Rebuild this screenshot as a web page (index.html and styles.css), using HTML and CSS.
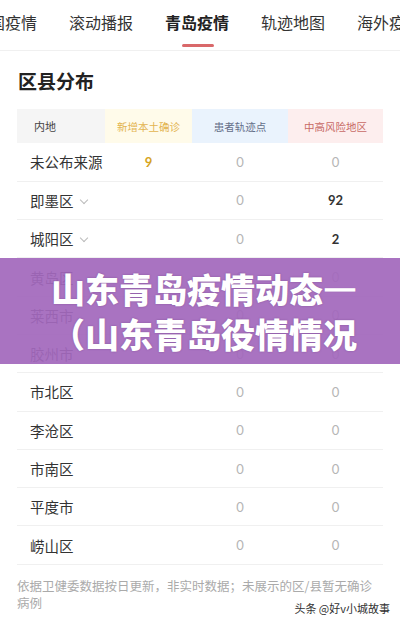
FILE: index.html
```html
<!DOCTYPE html>
<html lang="zh-CN">
<head>
    <meta charset="UTF-8">
    <meta name="viewport" content="width=device-width, initial-scale=1.0">
    <title>青岛疫情</title>
    <link rel="stylesheet" href="styles.css">
</head>
<body>

<div class="tabs">
    <span class="tab tab-first">全国疫情</span>
    <span class="tab">滚动播报</span>
    <span class="tab active">青岛疫情</span>
    <span class="tab">轨迹地图</span>
    <span class="tab">海外疫情</span>
</div>

<div class="section">
    <h2>区县分布</h2>

    <table class="dist">
        <tr class="head">
            <th class="c-area">内地</th>
            <th class="c-new">新增本土确诊</th>
            <th class="c-track">患者轨迹点</th>
            <th class="c-risk">中高风险地区</th>
        </tr>
        <tr><td class="name">未公布来源</td><td class="num yellow">9</td><td class="num">0</td><td class="num">0</td></tr>
        <tr><td class="name">即墨区 <span class="arrow"></span></td><td class="num"></td><td class="num">0</td><td class="num dark">92</td></tr>
        <tr><td class="name">城阳区 <span class="arrow"></span></td><td class="num"></td><td class="num">0</td><td class="num dark">2</td></tr>
        <tr><td class="name">黄岛区</td><td class="num"></td><td class="num">0</td><td class="num">0</td></tr>
        <tr><td class="name">莱西市</td><td class="num"></td><td class="num">0</td><td class="num">0</td></tr>
        <tr><td class="name">胶州市</td><td class="num"></td><td class="num">0</td><td class="num">0</td></tr>
        <tr><td class="name">市北区</td><td class="num"></td><td class="num">0</td><td class="num">0</td></tr>
        <tr><td class="name">李沧区</td><td class="num"></td><td class="num">0</td><td class="num">0</td></tr>
        <tr><td class="name">市南区</td><td class="num"></td><td class="num">0</td><td class="num">0</td></tr>
        <tr><td class="name">平度市</td><td class="num"></td><td class="num">0</td><td class="num">0</td></tr>
        <tr><td class="name">崂山区</td><td class="num"></td><td class="num">0</td><td class="num">0</td></tr>
    </table>

    <p class="note">依据卫健委数据按日更新，非实时数据；未展示的区/县暂无确诊病例</p>
    <div class="source">头条 @好v小城故事</div>
</div>

<div class="banner">
    <div class="banner-title">山东青岛疫情动态<span class="dash">—</span><br>（山东青岛役情情况</div>
</div>

</body>
</html>
```

FILE: styles.css
```css
body {
    margin: 0;
    font-family: "Noto Sans CJK SC", "Noto Sans", sans-serif;
    color: #333;
    background: #fff;
    width: 400px;
    height: 623px;
    overflow: hidden;
    position: relative;
}
.tabs {
    display: flex;
    gap: 32px;
    height: 50px;
    border-bottom: 1px solid #f0f0f0;
    white-space: nowrap;
    margin-left: -27px;
}
.tab {
    position: relative;
    font-size: 16px;
    line-height: 44px;
    color: #333;
}
.tab.active {
    font-weight: bold;
    color: #222;
}
.tab.active::after {
    content: "";
    position: absolute;
    left: 17px;
    width: 32px;
    top: 44px;
    height: 3px;
    border-radius: 2px;
    background-color: #d9686a;
}
.section {
    padding: 0 17px;
}
h2 {
    margin: 16px 0 0 1px;
    font-size: 19px;
    line-height: 28px;
    font-weight: bold;
    color: #222;
}
.dist {
    border-collapse: collapse;
    width: 366px;
    margin-top: 14px;
    table-layout: fixed;
}
.dist th {
    height: 34px;
    padding: 0;
    font-size: 10.5px;
    font-weight: normal;
    text-align: center;
}
.dist .c-area {
    width: 88px;
    background-color: #f5f5f5;
    color: #444;
    text-align: left;
    padding-left: 17px;
    font-size: 11px;
    box-sizing: border-box;
}
.dist .c-new {
    width: 87px;
    background-color: #fffbea;
    color: #e3b450;
}
.dist .c-track {
    width: 96px;
    background-color: #eaf3fd;
    color: #66708a;
}
.dist .c-risk {
    background-color: #fdeeee;
    color: #c86a66;
}
.dist td {
    height: 38.3px;
    padding: 0;
    border-bottom: 1px solid #f0f0f0;
    box-sizing: border-box;
}
.dist .name {
    padding-left: 13px;
    font-size: 14.5px;
    color: #333;
    white-space: nowrap;
}
.dist .num {
    text-align: center;
    font-family: "Lato", "Noto Sans", sans-serif;
    font-size: 13px;
    color: #b5b5b5;
}
.dist .num.yellow {
    color: #d6a41e;
    font-weight: bold;
}
.dist .num.dark {
    color: #333;
    font-weight: bold;
}
.arrow {
    display: inline-block;
    width: 5px;
    height: 5px;
    border-right: 1px solid #bbb;
    border-bottom: 1px solid #bbb;
    transform: rotate(45deg);
    margin: 0 0 4px 4px;
}
.note {
    margin: 12px 0 0;
    font-size: 12.5px;
    line-height: 17px;
    color: #aaa;
}
.source {
    text-align: right;
    font-size: 11px;
    color: #333;
    margin-top: -11px;
    margin-right: -7px;
}
.banner {
    position: absolute;
    left: 0;
    top: 258px;
    width: 400px;
    height: 106px;
    background-color: rgba(162, 104, 188, 0.93);
    display: flex;
    align-items: center;
    justify-content: center;
}
.banner-title {
    font-size: 34px;
    line-height: 45px;
    font-weight: 900;
    color: #fff;
    text-align: center;
    margin: 0 0 0 8px;
    text-shadow: 0 0 2px rgba(80, 40, 100, 0.4);
}
.dash {
    -webkit-text-stroke: 1.5px #fff;
}
```
